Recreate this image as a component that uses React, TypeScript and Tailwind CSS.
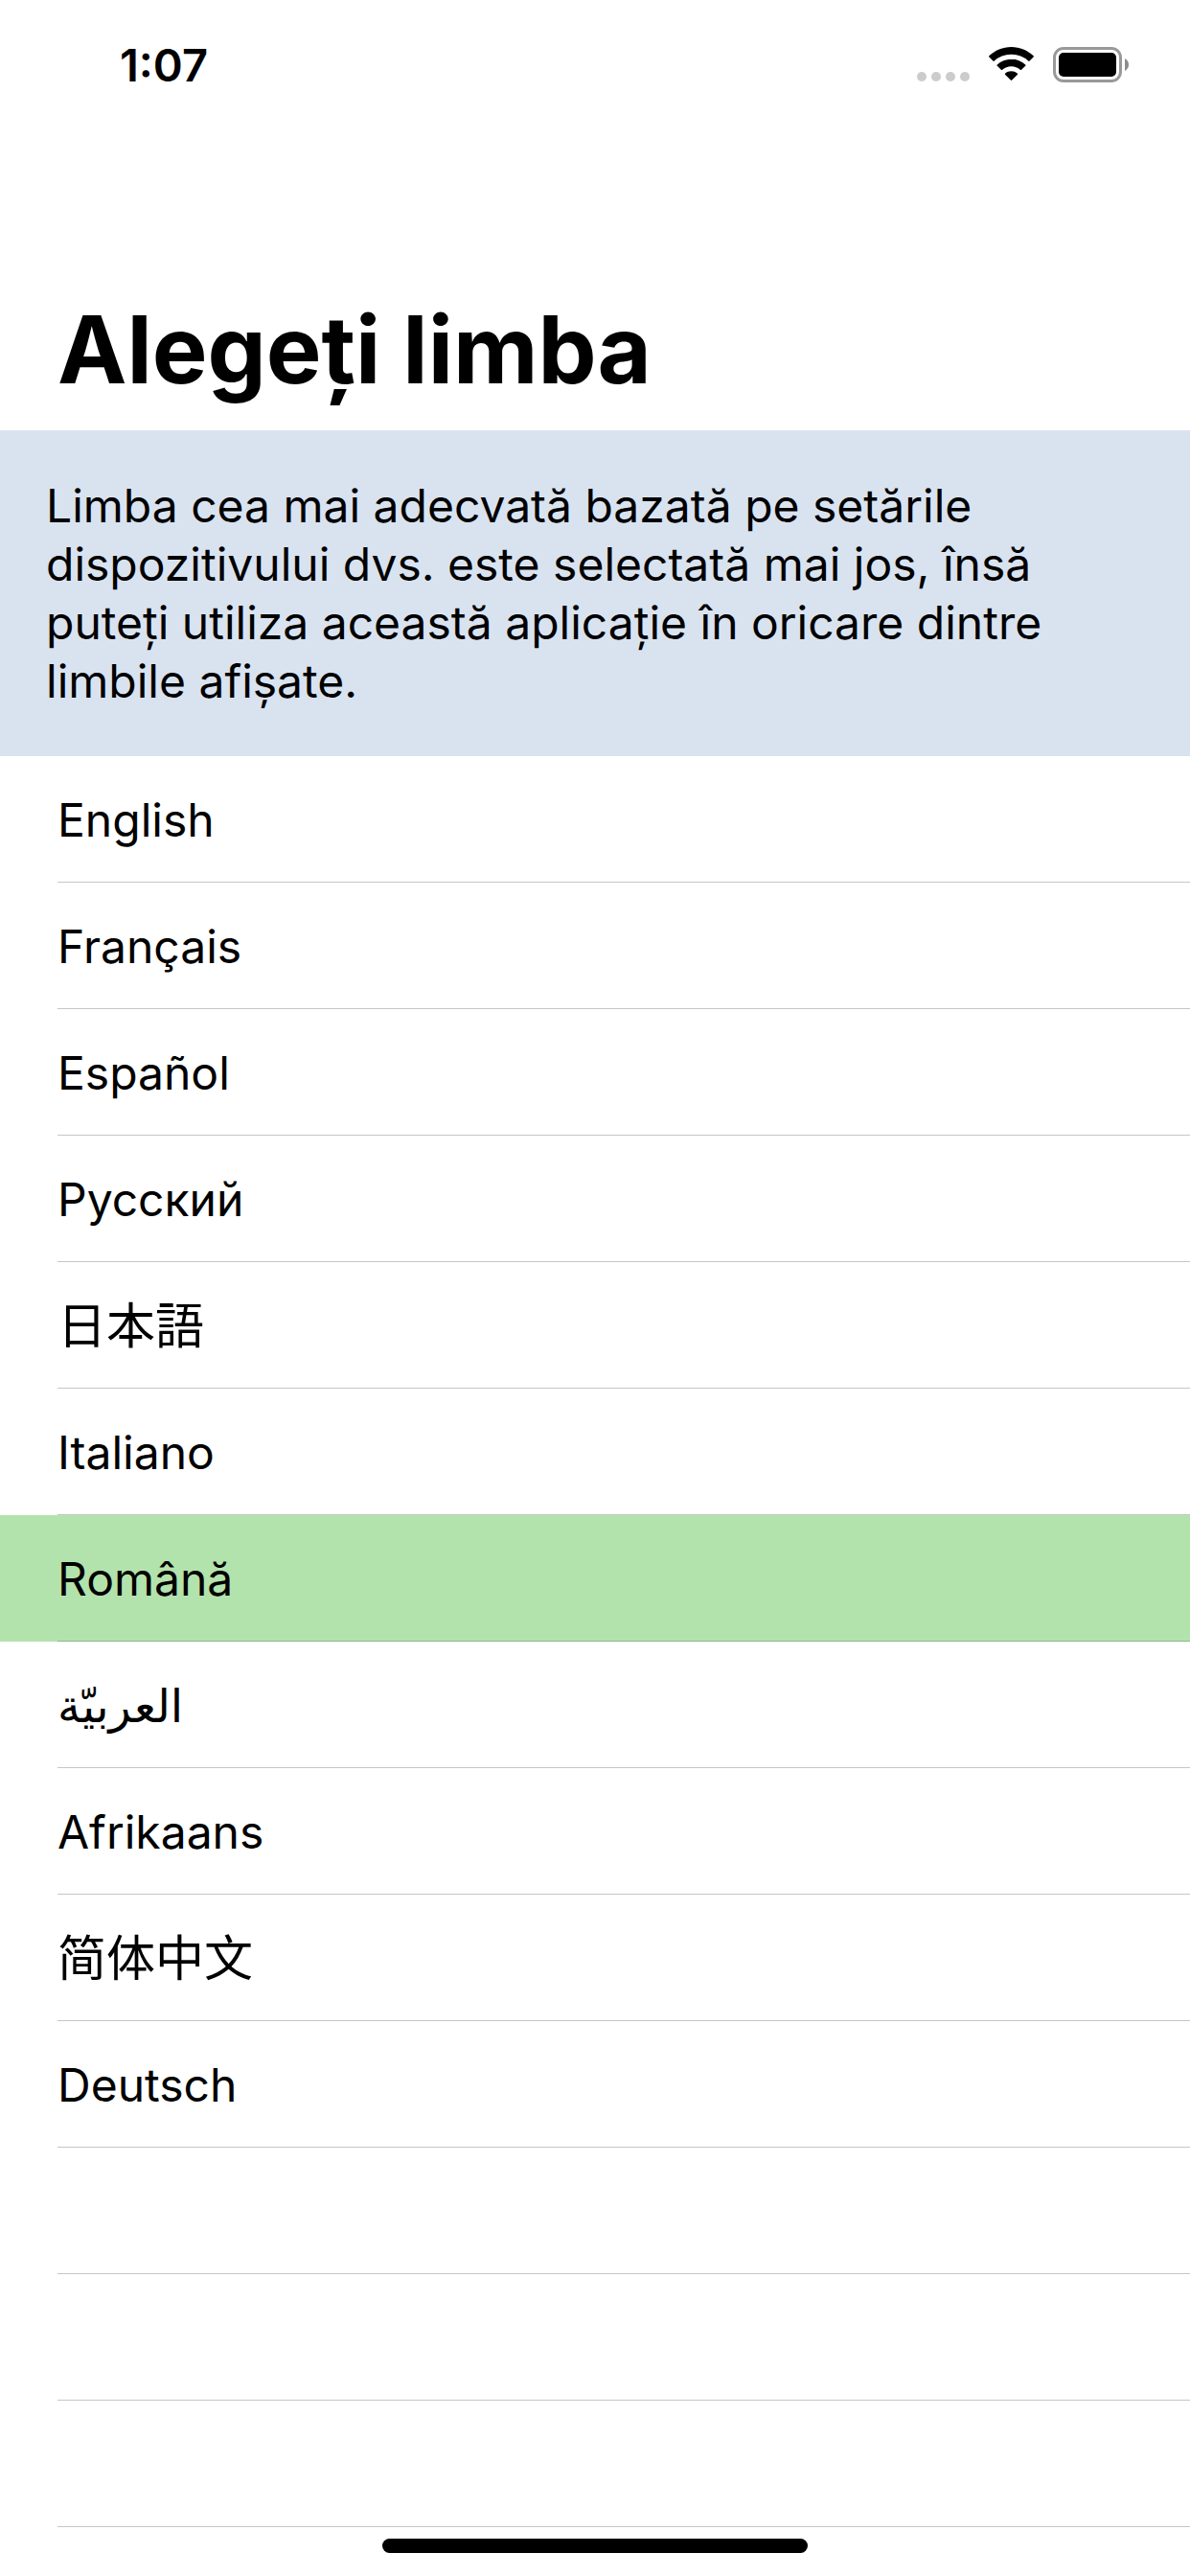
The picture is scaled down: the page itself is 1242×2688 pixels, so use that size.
import { useState } from 'react';

type Language = { code: string; name: string; font?: string };

const languages: Language[] = [
  { code: 'en', name: 'English' },
  { code: 'fr', name: 'Français' },
  { code: 'es', name: 'Español' },
  { code: 'ru', name: 'Русский' },
  { code: 'ja', name: '日本語', font: "text-[51px] font-[Inter,'Noto_Sans_CJK_JP',sans-serif]" },
  { code: 'it', name: 'Italiano' },
  { code: 'ro', name: 'Română' },
  { code: 'ar', name: 'العربيّة', font: "text-[48px] font-[Inter,'DejaVu_Sans',sans-serif]" },
  { code: 'af', name: 'Afrikaans' },
  { code: 'zh-Hans', name: '简体中文', font: "text-[51px] font-[Inter,'Noto_Sans_CJK_SC',sans-serif]" },
  { code: 'de', name: 'Deutsch' },
];

const emptyRows = [0, 1, 2];

function SignalDots() {
  return (
    <span className="flex gap-[5px] pt-[26px]">
      {[0, 1, 2, 3].map((dot) => (
        <span key={dot} className="size-[10px] rounded-full bg-[#cccccc]" />
      ))}
    </span>
  );
}

function WifiIcon() {
  return (
    <svg width="47" height="36" viewBox="0 0 47 36" aria-hidden="true">
      <path d="M23.5 0C14.6 0 6.4 3.5.4 9.3a.9.9 0 0 0 0 1.3l4 4a1 1 0 0 0 1.4 0A25.6 25.6 0 0 1 23.5 7.8a25.6 25.6 0 0 1 17.7 6.8 1 1 0 0 0 1.4 0l4-4a.9.9 0 0 0 0-1.3C40.6 3.5 32.4 0 23.5 0Z" />
      <path d="M23.500 12.700c-5.600 0-10.800 2.200-14.700 5.700a.9.9 0 0 0 0 1.400l4.100 4a1 1 0 0 0 1.300 0 13.900 13.900 0 0 1 18.600 0 1 1 0 0 0 1.300 0l4.100-4a.9.9 0 0 0 0-1.400 21.900 21.900 0 0 0-14.700-5.700Z" />
      <path d="M23.500 25.300c-2.400 0-4.600.8-6.300 2.200a.9.9 0 0 0 0 1.400l5.600 5.700a1 1 0 0 0 1.400 0l5.600-5.700a.9.9 0 0 0 0-1.400 9.900 9.900 0 0 0-6.300-2.200Z" />
    </svg>
  );
}

function BatteryIcon() {
  return (
    <svg width="79" height="37" viewBox="0 0 79 37" aria-hidden="true">
      <rect x="1.500" y="1.500" width="69" height="34" rx="9.500" fill="none" stroke="#999999" strokeWidth="3" />
      <rect x="6" y="6" width="60" height="25" rx="5" />
      <path d="M75 12v13c2.500-1.200 4-3.700 4-6.500s-1.500-5.300-4-6.500Z" fill="#8c8c8c" />
    </svg>
  );
}

export default function App() {
  const [selected, setSelected] = useState('ro');

  return (
    <main lang="ro" className="flex min-h-screen flex-col bg-white font-[Inter,sans-serif] text-black">
      <header>
        <div className="flex items-start justify-between pt-[49px] pr-16 pl-[125px]">
          <time className="text-[47px] leading-[37px] font-semibold">1:07</time>
          <div className="flex">
            <SignalDots />
            <span className="ml-5">
              <WifiIcon />
            </span>
            <span className="ml-5">
              <BatteryIcon />
            </span>
          </div>
        </div>
        <h1 className="px-[60px] pt-[219px] pb-6 text-[97px] leading-[120px] font-bold">Alegeți limba</h1>
      </header>

      <p className="bg-[#d9e3f0] p-12 text-[48px] leading-[61px]">
        Limba cea mai adecvată bazată pe setările dispozitivului dvs. este selectată mai jos, însă puteți utiliza această
        aplicație în oricare dintre limbile afișate.
      </p>

      <ul className="grow">
        {languages.map(({ code, name, font = 'text-[48px]' }) => (
          <li key={code} className={code === selected ? 'bg-[#b3e3ac]' : ''}>
            <button
              type="button"
              lang={code}
              aria-pressed={code === selected}
              onClick={() => setSelected(code)}
              className="block w-full pl-[60px] text-left"
            >
              <span
                className={`block border-b pt-[37px] pb-[34px] leading-[60px] ${
                  code === selected ? 'border-[#8fb58a]' : 'border-[#c6c6c6]'
                } ${font}`}
              >
                {name}
              </span>
            </button>
          </li>
        ))}
        {emptyRows.map((row) => (
          <li key={row} aria-hidden="true" className="ml-[60px] h-[132px] border-b border-[#c6c6c6]" />
        ))}
      </ul>

      <footer className="flex justify-center pt-3 pb-6">
        <span className="h-[15px] w-[444px] rounded-full bg-black" />
      </footer>
    </main>
  );
}
